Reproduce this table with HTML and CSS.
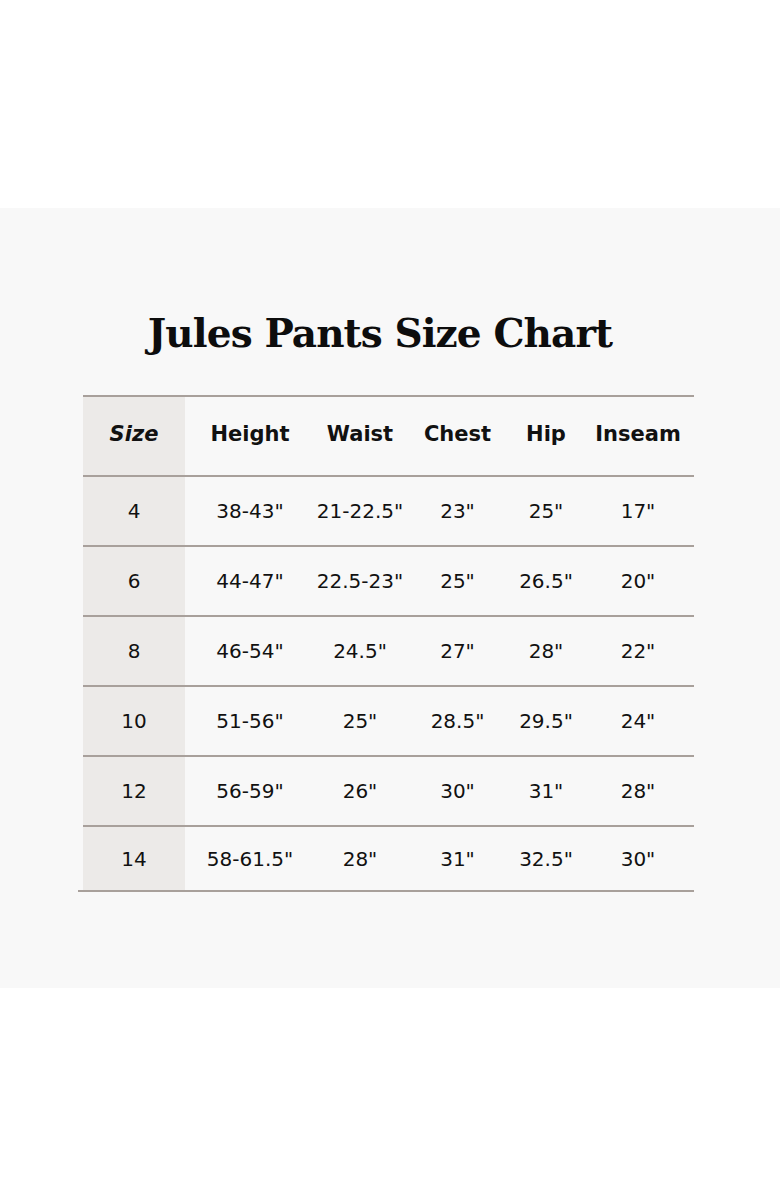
FILE: index.html
```html
<!DOCTYPE html>
<html lang="en">
<head>
<meta charset="utf-8">
<title>Jules Pants Size Chart</title>
<link rel="stylesheet" href="styles.css">
</head>
<body>
<main class="panel">
  <h1 class="title">Jules Pants Size Chart</h1>
  <div class="chart">
    <div class="row head">
      <div class="cell size"><em>Size</em></div>
      <div class="cell">Height</div>
      <div class="cell">Waist</div>
      <div class="cell">Chest</div>
      <div class="cell">Hip</div>
      <div class="cell">Inseam</div>
    </div>
    <div class="row">
      <div class="cell size">4</div>
      <div class="cell">38-43"</div>
      <div class="cell">21-22.5"</div>
      <div class="cell">23"</div>
      <div class="cell">25"</div>
      <div class="cell">17"</div>
    </div>
    <div class="row">
      <div class="cell size">6</div>
      <div class="cell">44-47"</div>
      <div class="cell">22.5-23"</div>
      <div class="cell">25"</div>
      <div class="cell">26.5"</div>
      <div class="cell">20"</div>
    </div>
    <div class="row">
      <div class="cell size">8</div>
      <div class="cell">46-54"</div>
      <div class="cell">24.5"</div>
      <div class="cell">27"</div>
      <div class="cell">28"</div>
      <div class="cell">22"</div>
    </div>
    <div class="row">
      <div class="cell size">10</div>
      <div class="cell">51-56"</div>
      <div class="cell">25"</div>
      <div class="cell">28.5"</div>
      <div class="cell">29.5"</div>
      <div class="cell">24"</div>
    </div>
    <div class="row">
      <div class="cell size">12</div>
      <div class="cell">56-59"</div>
      <div class="cell">26"</div>
      <div class="cell">30"</div>
      <div class="cell">31"</div>
      <div class="cell">28"</div>
    </div>
    <div class="row last">
      <div class="cell size">14</div>
      <div class="cell">58-61.5"</div>
      <div class="cell">28"</div>
      <div class="cell">31"</div>
      <div class="cell">32.5"</div>
      <div class="cell">30"</div>
    </div>
  </div>
</main>
</body>
</html>
```

FILE: styles.css
```css
html, body {
  margin: 0;
  padding: 0;
  background: #ffffff;
}

body {
  width: 780px;
  height: 1196px;
  padding-top: 208px;
  box-sizing: border-box;
  font-family: "DejaVu Sans", "Open Sans", sans-serif;
  color: #111111;
}

.panel {
  background: #f8f8f8;
  height: 780px;
  padding-top: 99px;
  box-sizing: border-box;
}

.title {
  margin: 0;
  height: 88px;
  padding-right: 20px;
  text-align: center;
  font-family: "DejaVu Serif", serif;
  font-weight: bold;
  font-size: 39px;
  line-height: 52px;
  letter-spacing: -0.9px;
  color: #0d0d0d;
}

.chart {
  margin-left: 83px;
  width: 611px;
  border-top: 2px solid #a8a09b;
}

.row {
  display: grid;
  grid-template-columns: 102px 130px 90px 105px 72px 112px;
  height: 68px;
  border-bottom: 2px solid #a8a09b;
  font-size: 20px;
}

.row.head {
  height: 78px;
  font-size: 21px;
  font-weight: bold;
}

.row.head .cell {
  padding-bottom: 5px;
}

.row.last {
  height: 63px;
  margin-left: -5px;
  padding-left: 5px;
}

.cell {
  display: flex;
  align-items: center;
  justify-content: center;
  white-space: nowrap;
}

.cell.size {
  background: #eceae8;
}

.cell em {
  font-style: italic;
}
```
